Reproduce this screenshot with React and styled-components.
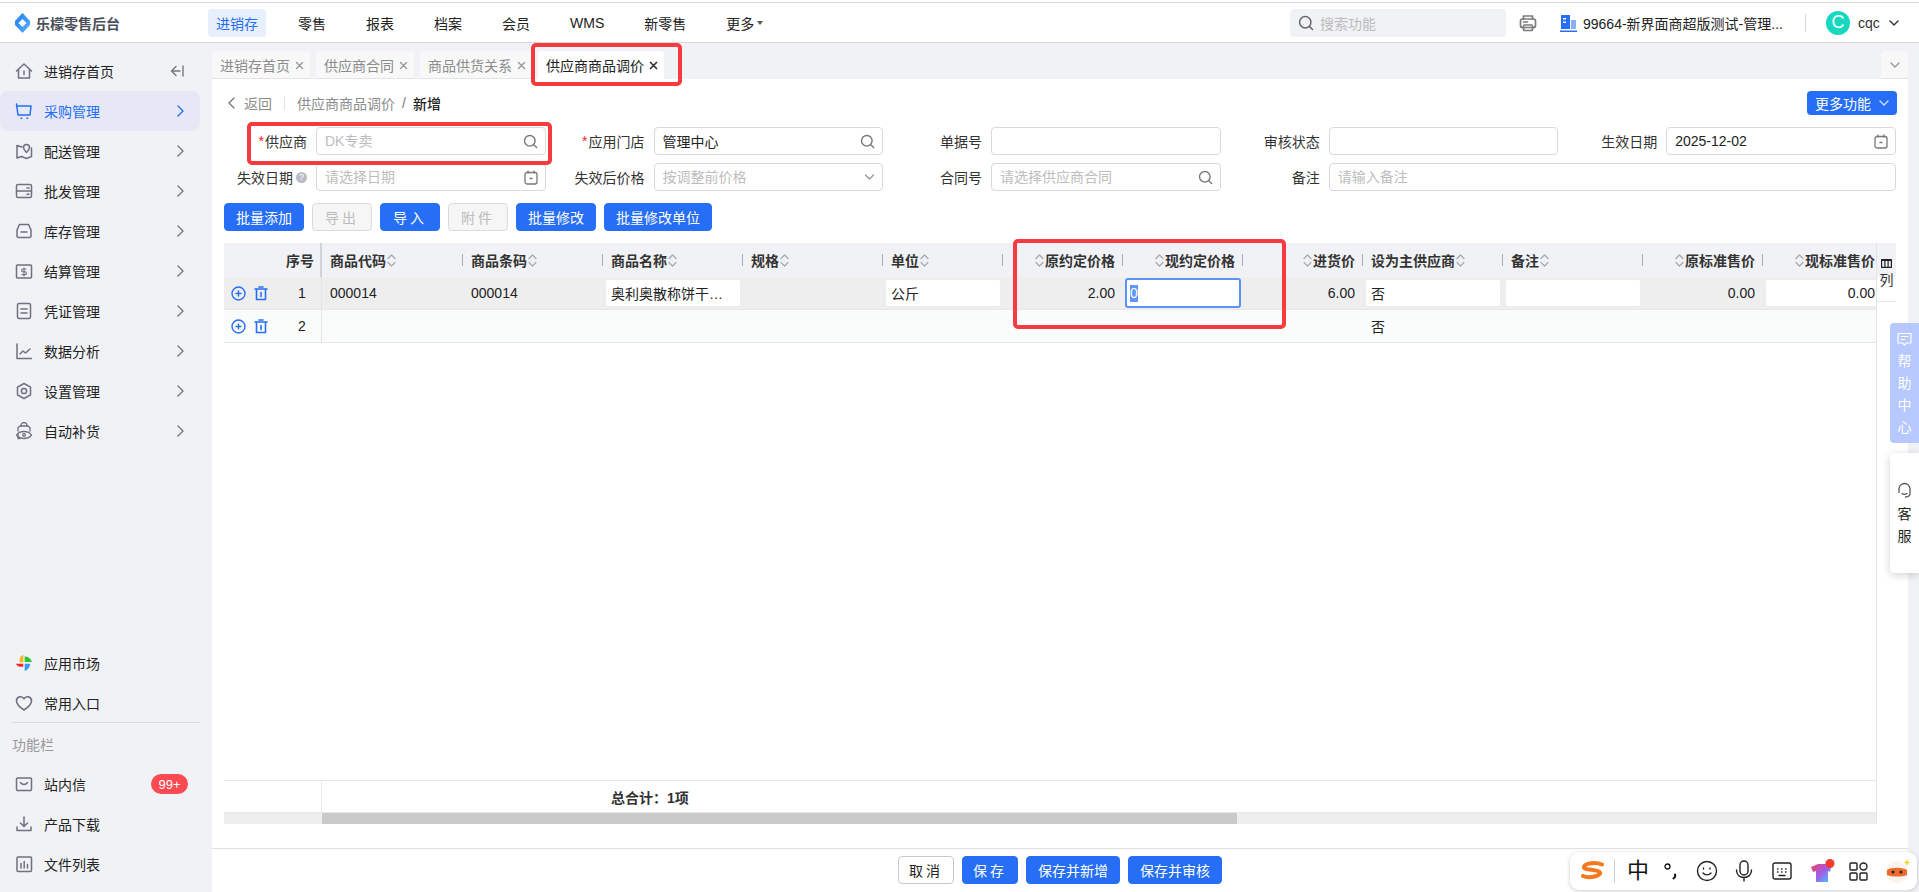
import React from "react";
import styled, { createGlobalStyle } from "styled-components";

const FONT = `"Liberation Sans", "Noto Sans CJK SC", sans-serif`;
const BLUE = "#256ef5";
const COLS = "98px 141px 140px 140px 140px 120px 120px 120px 120px 140px 140px 120px 120px";

const Global = createGlobalStyle`
  html, body { margin: 0; padding: 0; height: 100%; overflow: hidden; }
  body { font-family: ${FONT}; font-size: 14px; color: #222; background: #fff; }
  * { box-sizing: border-box; }
  input { font-family: ${FONT}; }
  input::placeholder { color: #bdbdbd; opacity: 1; }
`;

const Page = styled.div`position: relative; width: 1919px; height: 892px; display: flex; flex-direction: column; overflow: hidden;`;

/* header */
const Header = styled.header`
  height: 41px; margin-top: 2px; flex: none; display: flex; align-items: center; background: #fff;
  border-top: 1px solid #d9d9d9; border-bottom: 1px solid #d8d8d8; padding: 0 20px 0 15px;
`;
const Brand = styled.div`width: 193px; display: flex; align-items: center; gap: 6px; font-size: 14px; font-weight: 700; color: #4a4f5a;`;
const TopNav = styled.nav`display: flex; gap: 24px; align-items: center;`;
const TopItem = styled.div`
  height: 28px; padding: 0 8px; display: flex; align-items: center; gap: 3px; border-radius: 4px; font-size: 14px;
  color: ${p => (p.$active ? BLUE : "#222")}; background: ${p => (p.$active ? "#e8effc" : "transparent")};
`;
const Caret = styled.span`width: 0; height: 0; border-left: 3.5px solid transparent; border-right: 3.5px solid transparent; border-top: 4px solid #555;`;
const TopRight = styled.div`margin-left: auto; display: flex; align-items: center;`;
const SearchBox = styled.div`width: 216px; height: 28px; border-radius: 4px; background: #f1f2f5; display: flex; align-items: center; gap: 6px; padding-left: 8px; color: #bbb; font-size: 14px;`;
const PrinterSlot = styled.div`margin-left: 13px; display: flex;`;
const StoreSlot = styled.div`margin-left: 23px; display: flex;`;
const StoreName = styled.div`margin-left: 6px; width: 203px; white-space: nowrap; color: #222;`;
const VSep = styled.div`margin: 0 20px 0 19px; width: 1px; height: 18px; background: #d8d8d8;`;
const Avatar = styled.div`width: 24px; height: 24px; border-radius: 50%; background: #14d9bf; color: #fff; display: flex; align-items: center; justify-content: center; font-size: 18px;`;
const UserName = styled.div`margin: 0 10px 0 8px; width: 21px; color: #333;`;

/* body */
const Body = styled.div`flex: 1; min-height: 0; display: flex;`;
const Sidebar = styled.aside`width: 212px; flex: none; background: #f1f2f5; display: flex; flex-direction: column; padding-top: 8px;`;
const SideGroup = styled.div`display: flex; flex-direction: column; margin-top: ${p => (p.$bottom ? "auto" : "0")}; padding-bottom: ${p => (p.$bottom ? "8px" : "0")};`;
const SideItem = styled.div`
  height: 40px; width: 200px; flex: none; display: flex; align-items: center; padding: 0 16px 0 15px; gap: 11px; border-radius: 8px; font-size: 14px;
  color: ${p => (p.$active ? BLUE : "#222")}; background: ${p => (p.$active ? "#e6e9f5" : "transparent")};
  svg.end { margin-left: auto; }
`;
const IconBox = styled.span`width: 18px; height: 18px; flex: none; display: flex; align-items: center; justify-content: center;`;
const Badge = styled.span`margin-left: auto; margin-right: -4px; width: 37px; height: 20px; border-radius: 10px; background: #fb4a52; color: #fff; font-size: 13px; display: flex; align-items: center; justify-content: center;`;
const SideRule = styled.div`height: 1px; margin: -1px 12px 0; background: #d9dadd;`;
const SideTitle = styled.div`height: 41px; padding-left: 12px; display: flex; align-items: center; color: #999; font-size: 14px;`;

const Main = styled.main`flex: 1; min-width: 0; display: flex; flex-direction: column; background: #f1f2f5; padding-right: 11px;`;
const TabBar = styled.div`height: 36px; flex: none; padding-top: 8px; display: flex; gap: 6px; position: relative;`;
const Tab = styled.div`
  height: 28px; display: flex; align-items: center; gap: 5px; border-radius: 4px 4px 0 0; padding: 0 6px 0 8px;
  background: ${p => (p.$active ? "#fff" : "#f8f8f9")}; color: ${p => (p.$active ? "#222" : "#8c8c8c")};
  box-shadow: ${p => (p.$active ? "none" : "inset 0 -1px 0 #e4e4e6")};
`;
const TabMore = styled.div`margin-left: auto; width: 27px; height: 28px; background: #f8f8f9; border-radius: 4px 4px 0 0; display: flex; align-items: center; justify-content: center; box-shadow: inset 0 -1px 0 #e4e4e6;`;

const Content = styled.section`flex: 1; min-height: 0; background: #fff; display: flex; flex-direction: column; padding-top: 12px;`;
const Crumbs = styled.div`height: 24px; flex: none; display: flex; align-items: center; padding: 0 11px 0 16px; color: #8c8c8c;`;
const BackText = styled.span`margin-left: 9px; color: #8c8c8c;`;
const CrumbSep = styled.span`width: 1px; height: 14px; margin: 0 12px; background: #e2e2e2;`;
const CrumbSlash = styled.span`margin: 0 7px; color: #777;`;
const CrumbNow = styled.span`color: #222; font-weight: 500;`;
const MoreBtn = styled.button`margin-left: auto; width: 90px; height: 24px; border: 0; border-radius: 4px; background: ${BLUE}; color: #fff; font: 14px ${FONT}; display: flex; align-items: center; justify-content: center; gap: 8px; padding: 0;`;

const FormGrid = styled.div`flex: none; margin: 12px 0 0 16px; display: grid; grid-template-columns: repeat(5, 317.8px); column-gap: 19.75px; row-gap: 8px;`;
const Field = styled.div`display: grid; grid-template-columns: 88px 1fr; align-items: center; grid-column: span ${p => p.$span || 1};`;
const Label = styled.label`display: flex; align-items: center; justify-content: flex-end; padding-right: 9px; color: #333; white-space: nowrap;`;
const Star = styled.span`color: #f5222d; margin-right: 1px;`;
const Help = styled.span`margin-left: 3px; width: 11px; height: 11px; border-radius: 50%; background: #b9bcc6; color: #fff; font-size: 9px; line-height: 11px; text-align: center;`;
const FieldBox = styled.div`height: 28px; border: 1px solid #d9d9d9; border-radius: 4px; background: #fff; display: flex; align-items: center; padding: 0 7px 0 8px;`;
const FieldInput = styled.input`flex: 1; min-width: 0; border: 0; outline: 0; padding: 0; font-size: 14px; color: #222; background: transparent;`;

const Toolbar = styled.div`flex: none; margin: 12px 0 0 12px; display: flex; gap: 8px;`;
const Btn = styled.button`
  height: 28px; padding: 0; width: ${p => p.$w}px; border-radius: 4px; font: 14px ${FONT}; display: flex; align-items: center; justify-content: center;
  border: 1px solid ${p => (p.$kind === "primary" ? BLUE : p.$kind === "disabled" ? "#dcdcdc" : "#c8c8c8")};
  background: ${p => (p.$kind === "primary" ? BLUE : p.$kind === "disabled" ? "#f6f6f6" : "#fff")};
  color: ${p => (p.$kind === "primary" ? "#fff" : p.$kind === "disabled" ? "#bbb" : "#222")};
  letter-spacing: ${p => (p.$spaced ? "3px" : "0")};
`;

const TableWrap = styled.div`flex: 1; min-height: 0; margin: 12px 12px 0; display: flex;`;
const TableMain = styled.div`width: 1652px; flex: none; display: flex; flex-direction: column; overflow: hidden;`;
const Row = styled.div`
  display: grid; grid-template-columns: ${COLS}; width: 1659px; flex: none; height: ${p => p.$h}px; background: ${p => p.$bg};
  border-bottom: ${p => (p.$line ? "1px solid #e8e8e8" : "0")};
`;
const HeadCell = styled.div`
  position: relative; display: flex; align-items: center; gap: 1px; padding: 0 8px; font-weight: 700; color: #333; white-space: nowrap;
  justify-content: ${p => (p.$right ? "flex-end" : "flex-start")};
  &::after { content: ""; display: ${p => (p.$nosep ? "none" : "block")}; position: absolute; right: 0; top: 11px; height: 12px; width: 1px; background: #a9adb8; }
`;
const SeqHead = styled.div`display: flex; align-items: center; justify-content: flex-end; padding-right: 6px; font-weight: 700; color: #333; border-right: 2px solid #cfd2d9;`;
const ActionCell = styled.div`display: flex; align-items: center; padding-left: 7px; border-right: 1px solid #e4e4e4; gap: 8px;`;
const SeqNum = styled.span`margin-left: 16px; width: 20px; text-align: center; color: #222;`;
const Cell = styled.div`display: flex; align-items: center; padding: 0 8px; color: #222; justify-content: ${p => (p.$right ? "flex-end" : "flex-start")};`;
const EditCell = styled.div`display: flex; align-items: center; padding: 0 3px; justify-content: ${p => (p.$right ? "flex-end" : "flex-start")};`;
const EditBox = styled.div`
  width: 100%; height: 26px; border-radius: 2px; background: #fff; padding: 0 5px; display: flex; align-items: center; color: #222; overflow: hidden;
  justify-content: ${p => (p.$right ? "flex-end" : "flex-start")}; white-space: nowrap;
`;
const FocusBox = styled.div`width: calc(100% + 2px); flex: none; height: 30px; margin-left: -1px; border: 2px solid #5b93f3; border-radius: 3px; background: #fff; padding: 0 3px; display: flex; align-items: center;`;
const Selected = styled.span`background: #5f96f6; color: #fff; line-height: 17px;`;
const TableSpace = styled.div`flex: 1; min-height: 0;`;
const FootRow = styled.div`height: 33px; flex: none; display: grid; grid-template-columns: 98px 1fr; border-top: 1px solid #e8e8e8; border-bottom: 1px solid #e8e8e8;`;
const FootLead = styled.div`border-right: 1px solid #e8e8e8;`;
const FootText = styled.div`padding-left: 289px; display: flex; align-items: center; font-weight: 700; color: #333;`;
const Track = styled.div`height: 11px; flex: none; background: #eeeeee; padding-left: 98px;`;
const Thumb = styled.div`height: 100%; width: 915px; background: #cacaca;`;
const SetCol = styled.div`width: 20px; flex: none; border-left: 1px solid #e4e4e4;`;
const SetHead = styled.div`height: 59px; border-bottom: 1px solid #e8e8e8; display: flex; flex-direction: column; align-items: center; gap: 4px; padding-top: 16px; font-size: 14px; color: #333; line-height: 17px; background: linear-gradient(#f1f2f5 34px, #fff 34px);`;

const BottomBar = styled.footer`height: 44px; flex: none; margin-top: 24px; border-top: 1px solid #e0e0e0; display: flex; align-items: center; justify-content: center; gap: 8px; padding-bottom: 1px;`;

/* overlays */
const Mark = styled.div`position: absolute; left: ${p => p.$x}px; top: ${p => p.$y}px; width: ${p => p.$w}px; height: ${p => p.$h}px; border: 4px solid #f63a3f; border-radius: 5px; pointer-events: none;`;
const HelpFloat = styled.div`position: absolute; left: 1890px; top: 323px; width: 29px; height: 120px; border-radius: 4px 0 0 4px; background: #b6c8fd; color: #fff; display: flex; flex-direction: column; align-items: center; padding-top: 9px; line-height: 22px; font-size: 14px; svg { margin-bottom: 4px; }`;
const ServiceFloat = styled.div`position: absolute; left: 1890px; top: 453px; width: 29px; height: 120px; border-radius: 4px 0 0 4px; background: #fff; color: #222; display: flex; flex-direction: column; align-items: center; padding-top: 29px; line-height: 22px; font-size: 14px; box-shadow: 0 2px 8px rgba(0,0,0,.18); svg { margin-bottom: 3px; }`;
const ImeBar = styled.div`position: absolute; left: 1570px; top: 852px; width: 347px; height: 38px; background: #fff; border-radius: 9px; box-shadow: 0 1px 4px rgba(0,0,0,.2); display: flex; align-items: center; padding-left: 11px;`;
const ImeSep = styled.span`width: 1px; height: 24px; background: #cfcfcf; margin: 0 12px 0 10px;`;
const ImeZh = styled.span`font-size: 22px; color: #111; width: 22px; line-height: 22px; text-align: center; margin-right: 15px;`;
const ImeSlot = styled.span`display: flex; margin-right: ${p => p.$mr}px;`;

/* icons */
const Stroke = ({ w = 18, h = 18, vb, c = "#6d7180", sw = 1.5, children, className }) => (
  <svg className={className} width={w} height={h} viewBox={vb || `0 0 ${w} ${h}`} fill="none" stroke={c} strokeWidth={sw} strokeLinecap="round" strokeLinejoin="round">{children}</svg>
);
const Chev = ({ c = "#777", className }) => <Stroke className={className} w={7} h={12} c={c} sw={1.4}><path d="M1 1l5 5-5 5" /></Stroke>;
const ChevDown = ({ c = "#888", w = 10 }) => <Stroke w={w} h={6} vb="0 0 10 6" c={c} sw={1.4}><path d="M1 1l4 4 4-4" /></Stroke>;
const Mag = ({ c = "#777", s = 15 }) => <Stroke w={s} h={s} vb="0 0 15 15" c={c} sw={1.4}><circle cx="6.8" cy="6.8" r="5.3" /><path d="M11 11l2.6 2.6" /></Stroke>;
const Cal = () => <Stroke w={14} h={15} c="#777" sw={1.3}><rect x="1" y="2.5" width="12" height="11.5" rx="2" /><path d="M4 1v2M10 1v2M6 8.5h2" /></Stroke>;
const X = ({ c = "#999", sw = 1.4 }) => <Stroke w={9} h={9} c={c} sw={sw}><path d="M1.5 1.5l6 6M7.5 1.5l-6 6" /></Stroke>;
const Sort = () => <Stroke w={9} h={15} c="#a5a8b0" sw={1.2}><path d="M1 5.5l3.5-3.5L8 5.5M1 9.5L4.5 13 8 9.5" /></Stroke>;
const Plus = () => <Stroke w={15} h={15} c={BLUE} sw={1.4}><circle cx="7.5" cy="7.5" r="6.5" /><path d="M5 7.5h5M7.5 5v5" /></Stroke>;
const Trash = () => <Stroke w={14} h={15} c={BLUE} sw={1.6}><path d="M1 3h12M5 1h4M2.5 3v10.5h9V3M7 6.5v4" /></Stroke>;

const sideIcons = {
  home: <Stroke><path d="M1.5 9L9 2l7.5 7M3.5 7.500V16h11V7.500M9 9v3.500" /></Stroke>,
  cart: <Stroke c={BLUE}><path d="M1.5 2L3 13h12l1-9H2" /><path d="M6 16.300h.6M12 16.300h.6" /></Stroke>,
  map: <Stroke><path d="M7 5L2 3.500v12.500l4.500-1.500 5 2 5-2V6" /><path d="M11.500 10.500C9.500 8.500 8.500 7 8.500 5.500a3 3 0 016 0c0 1.500-1 3-3 5z" /></Stroke>,
  whole: <Stroke><rect x="1.500" y="2.500" width="15" height="13" rx="1.500" /><path d="M1.500 9h15M12 6h2M12 12.300h2" /></Stroke>,
  stock: <Stroke><path d="M4.500 2.500h9L16 8v6a1.500 1.500 0 01-1.500 1.500h-11A1.500 1.500 0 012 14V8z" /><path d="M6 10h6" /></Stroke>,
  settle: <Stroke><rect x="1.500" y="3" width="15" height="13" rx="1" /><path d="M11 7H8a1.200 1.200 0 000 2.800h2a1.200 1.200 0 010 2.800H7M9 6v8" strokeWidth={1.1} /></Stroke>,
  voucher: <Stroke><rect x="2.500" y="1.500" width="13" height="15" rx="1.500" /><path d="M6 7h6M6 11h6" /></Stroke>,
  chart: <Stroke><path d="M2 2v14.500h14.500M5 12l3-3 2.500 2 4.500-4" /></Stroke>,
  gear: <Stroke><path d="M9 1.500l6.500 3.700v7.600L9 16.500l-6.500-3.700V5.200z" /><circle cx="9" cy="9" r="2.600" /></Stroke>,
  auto: <Stroke sw={1.3}><path d="M3 9V5.500l2-1.500h8l2 1.500V9" /><path d="M6 4V3.500a3 3 0 016 0V4" /><path d="M1.500 13c2-3 4.500-3.500 7.500-3.500s5.500.5 7.500 3.500c-2 2.500-4.500 3.500-7.500 3.500s-5.500-1-7.500-3.500z" /><circle cx="9" cy="13" r="1.300" /><path d="M3 12v4.500h2" /></Stroke>,
  heart: <Stroke sw={1.6}><path d="M9 16C3.500 12.500 1.500 9.800 1.500 6.800A4 4 0 019 4.800a4 4 0 017.500 2c0 3-2 5.700-7.500 9.200z" /></Stroke>,
  mail: <Stroke><rect x="1.500" y="3" width="15" height="12.500" rx="1" /><path d="M5.500 7.500c1 1.500 2.200 2 3.500 2s2.500-.5 3.500-2" /></Stroke>,
  down: <Stroke><path d="M9 2v9M5.500 8L9 11.500 12.500 8M2 12v3.500h14V12" /></Stroke>,
  file: <Stroke><rect x="2" y="2" width="14.500" height="14.500" rx="1" /><path d="M6 8.500v4.500M9.200 6.500v6.500M12.500 9.500V13" /></Stroke>,
  market: (
    <svg width="18" height="18" viewBox="0 0 18 18">
      <path d="M8.300 1C6 1.500 4.500 3.500 4.500 8.300h3.800z" fill="#fbb117" />
      <path d="M9.700 2.500C12.500 2.500 16 4 16.800 8H9.700z" fill="#2ec42e" />
      <path d="M1 9.700h7.300v3C5 13 2 12.500 1 9.700z" fill="#f5282d" />
      <path d="M9.700 9.700h5.500c0 3-2.500 6.300-5.500 7.300z" fill="#3d9bf5" />
    </svg>
  ),
};

const sideTop = [
  ["home", "进销存首页"], ["cart", "采购管理"], ["map", "配送管理"], ["whole", "批发管理"], ["stock", "库存管理"],
  ["settle", "结算管理"], ["voucher", "凭证管理"], ["chart", "数据分析"], ["gear", "设置管理"], ["auto", "自动补货"],
];

const headCols = [
  { t: "商品代码" }, { t: "商品条码" }, { t: "商品名称" }, { t: "规格" }, { t: "单位" },
  { t: "原约定价格", r: 1 }, { t: "现约定价格", r: 1 }, { t: "进货价", r: 1 },
  { t: "设为主供应商" }, { t: "备注" }, { t: "原标准售价", r: 1 }, { t: "现标准售价", r: 1, nosep: 1 },
];

export default function App() {
  return (
    <Page>
      <Global />
      <Header>
        <Brand>
          <svg width="15" height="20" viewBox="0 0 15 20">
            <defs><linearGradient id="logo" x1="0" y1="0" x2="1" y2="1"><stop offset="0" stopColor="#1f7af2" /><stop offset="1" stopColor="#58b4fa" /></linearGradient></defs>
            <path fillRule="evenodd" d="M7.500 0L15 8v4l-7.500 8L0 12V8zM7.500 6L3.500 10l4 4 4-4z" fill="url(#logo)" />
          </svg>
          乐檬零售后台
        </Brand>
        <TopNav>
          <TopItem $active>进销存</TopItem>
          <TopItem>零售</TopItem>
          <TopItem>报表</TopItem>
          <TopItem>档案</TopItem>
          <TopItem>会员</TopItem>
          <TopItem>WMS</TopItem>
          <TopItem>新零售</TopItem>
          <TopItem>更多<Caret /></TopItem>
        </TopNav>
        <TopRight>
          <SearchBox><Mag c="#666" s={16} />搜索功能</SearchBox>
          <PrinterSlot>
            <Stroke c="#7a7a7a" sw={1.7}><path d="M4.500 5V2h9v3" /><rect x="1.500" y="5" width="15" height="8.500" rx="2" /><rect x="4.500" y="11" width="9" height="5.500" rx="1" /><path d="M4.500 8h4" /></Stroke>
          </PrinterSlot>
          <StoreSlot>
            <svg width="17" height="18" viewBox="0 0 17 18">
              <path d="M1 1h9v14H1z" fill={BLUE} />
              <path d="M11 6h5v9h-5z" fill="#8ab0f8" />
              <path d="M3 4h3v1.500H3zM3 7.500h3V9H3z" fill="#fff" />
              <path d="M0 16.500h17V18H0z" fill={BLUE} />
            </svg>
          </StoreSlot>
          <StoreName>99664-新界面商超版测试-管理...</StoreName>
          <VSep />
          <Avatar>C</Avatar>
          <UserName>cqc</UserName>
          <ChevDown c="#333" />
        </TopRight>
      </Header>
      <Body>
        <Sidebar>
          <SideGroup>
            {sideTop.map(([k, t], i) => (
              <SideItem key={k} $active={k === "cart"}>
                <IconBox>{sideIcons[k]}</IconBox>
                {t}
                {i === 0 ? (
                  <Stroke className="end" w={14} h={12} c="#777" sw={1.4}><path d="M6 1.500L1.500 6 6 10.500M1.500 6H10M13 1v10" /></Stroke>
                ) : (
                  <Chev className="end" c={k === "cart" ? BLUE : "#777"} />
                )}
              </SideItem>
            ))}
          </SideGroup>
          <SideGroup $bottom>
            <SideItem><IconBox>{sideIcons.market}</IconBox>应用市场</SideItem>
            <SideItem><IconBox>{sideIcons.heart}</IconBox>常用入口</SideItem>
            <SideRule />
            <SideTitle>功能栏</SideTitle>
            <SideItem><IconBox>{sideIcons.mail}</IconBox>站内信<Badge>99+</Badge></SideItem>
            <SideItem><IconBox>{sideIcons.down}</IconBox>产品下载</SideItem>
            <SideItem><IconBox>{sideIcons.file}</IconBox>文件列表</SideItem>
          </SideGroup>
        </Sidebar>
        <Main>
          <TabBar>
            <Tab>进销存首页<X /></Tab>
            <Tab>供应商合同<X /></Tab>
            <Tab>商品供货关系<X /></Tab>
            <Tab $active>供应商商品调价<X c="#333" sw={1.7} /></Tab>
            <TabMore><ChevDown c="#999" /></TabMore>
          </TabBar>
          <Content>
            <Crumbs>
              <Stroke w={7} h={12} c="#777" sw={1.3}><path d="M6 1L1 6l5 5" /></Stroke>
              <BackText>返回</BackText>
              <CrumbSep />
              供应商商品调价
              <CrumbSlash>/</CrumbSlash>
              <CrumbNow>新增</CrumbNow>
              <MoreBtn>更多功能<ChevDown c="#cfe0ff" /></MoreBtn>
            </Crumbs>
            <FormGrid>
              <Field><Label><Star>*</Star>供应商</Label><FieldBox><FieldInput readOnly placeholder="DK专卖" /><Mag /></FieldBox></Field>
              <Field><Label><Star>*</Star>应用门店</Label><FieldBox><FieldInput readOnly value="管理中心" /><Mag /></FieldBox></Field>
              <Field><Label>单据号</Label><FieldBox><FieldInput readOnly /></FieldBox></Field>
              <Field><Label>审核状态</Label><FieldBox><FieldInput readOnly /></FieldBox></Field>
              <Field><Label>生效日期</Label><FieldBox><FieldInput readOnly value="2025-12-02" /><Cal /></FieldBox></Field>
              <Field><Label>失效日期<Help>?</Help></Label><FieldBox><FieldInput readOnly placeholder="请选择日期" /><Cal /></FieldBox></Field>
              <Field><Label>失效后价格</Label><FieldBox><FieldInput readOnly placeholder="按调整前价格" /><ChevDown c="#999" w={11} /></FieldBox></Field>
              <Field><Label>合同号</Label><FieldBox><FieldInput readOnly placeholder="请选择供应商合同" /><Mag /></FieldBox></Field>
              <Field $span={2}><Label>备注</Label><FieldBox><FieldInput readOnly placeholder="请输入备注" /></FieldBox></Field>
            </FormGrid>
            <Toolbar>
              <Btn $kind="primary" $w={80}>批量添加</Btn>
              <Btn $kind="disabled" $w={60} $spaced>导出</Btn>
              <Btn $kind="primary" $w={60} $spaced>导入</Btn>
              <Btn $kind="disabled" $w={60} $spaced>附件</Btn>
              <Btn $kind="primary" $w={80}>批量修改</Btn>
              <Btn $kind="primary" $w={108}>批量修改单位</Btn>
            </Toolbar>
            <TableWrap>
              <TableMain>
                <Row $h={34} $bg="#f1f2f5">
                  <SeqHead>序号</SeqHead>
                  {headCols.map(c => (
                    <HeadCell key={c.t} $right={c.r} $nosep={c.nosep}>
                      {c.r ? <Sort /> : null}{c.t}{c.r ? null : <Sort />}
                    </HeadCell>
                  ))}
                </Row>
                <Row $h={33} $bg="#eeeeee" $line>
                  <ActionCell><Plus /><Trash /><SeqNum>1</SeqNum></ActionCell>
                  <Cell>000014</Cell>
                  <Cell>000014</Cell>
                  <EditCell><EditBox>奥利奥散称饼干…</EditBox></EditCell>
                  <Cell />
                  <EditCell><EditBox>公斤</EditBox></EditCell>
                  <Cell $right>2.00</Cell>
                  <EditCell><FocusBox><Selected>0</Selected></FocusBox></EditCell>
                  <Cell $right>6.00</Cell>
                  <EditCell><EditBox>否</EditBox></EditCell>
                  <EditCell><EditBox /></EditCell>
                  <Cell $right>0.00</Cell>
                  <EditCell><EditBox $right>0.00</EditBox></EditCell>
                </Row>
                <Row $h={33} $bg="#fafbfb" $line>
                  <ActionCell><Plus /><Trash /><SeqNum>2</SeqNum></ActionCell>
                  <Cell /><Cell /><Cell /><Cell /><Cell /><Cell /><Cell /><Cell />
                  <Cell>否</Cell>
                  <Cell /><Cell /><Cell />
                </Row>
                <TableSpace />
                <FootRow><FootLead /><FootText>总合计：1项</FootText></FootRow>
                <Track><Thumb /></Track>
              </TableMain>
              <SetCol>
                <SetHead>
                  <Stroke w={11} h={9} c="#222" sw={1.2}><rect x=".6" y=".6" width="9.800" height="7.800" /><path d="M3.900 1v7M7.100 1v7M.6 1.500h9.800" /></Stroke>
                  列
                </SetHead>
              </SetCol>
            </TableWrap>
            <BottomBar>
              <Btn $w={56} $spaced>取消</Btn>
              <Btn $kind="primary" $w={56} $spaced>保存</Btn>
              <Btn $kind="primary" $w={94}>保存并新增</Btn>
              <Btn $kind="primary" $w={94}>保存并审核</Btn>
            </BottomBar>
          </Content>
        </Main>
      </Body>

      <Mark $x={531} $y={43} $w={151} $h={43} />
      <Mark $x={247} $y={122} $w={305} $h={43} />
      <Mark $x={1013} $y={239} $w={273} $h={90} />

      <HelpFloat>
        <Stroke w={15} h={14} c="#fff" sw={1.2}><path d="M1 1.500h13v9.500H9.500L7.500 13l-2-2H1zM4 4.500h7M4 7.500h4" /></Stroke>
        帮<br />助<br />中<br />心
      </HelpFloat>
      <ServiceFloat>
        <Stroke w={17} h={18} c="#555" sw={1.3}><path d="M3 9V7a5.500 5.500 0 0111 0v2M3 6.500v4M14 6.500v4M14 11c0 3-2.500 4-4.500 4M6 11.500c1.500 1 3.500 1 5 0" /></Stroke>
        客<br />服
      </ServiceFloat>
      <ImeBar>
        <svg width="23" height="20" viewBox="0 0 23 20"><path d="M21 3.500C15 1 4 2 3 6c-.8 3.500 14 2 16 5.500 1.500 3-10 6.500-17 3.500" fill="none" stroke="#f47a20" strokeWidth="4" strokeLinecap="round" /></svg>
        <ImeSep />
        <ImeZh>中</ImeZh>
        <ImeSlot $mr={19}><Stroke w={13} h={18} c="#111" sw={1.3}><circle cx="3.500" cy="4.500" r="2.500" /><path d="M11 12.500c.5 1.500 0 3-1.500 4" strokeWidth="2" /></Stroke></ImeSlot>
        <ImeSlot $mr={17}><Stroke w={22} h={22} c="#222" sw={1.4}><circle cx="11" cy="11" r="9.500" /><path d="M7 13c2 2.500 6 2.500 8 0M7.500 8v1M14 8v1" /></Stroke></ImeSlot>
        <ImeSlot $mr={19}><Stroke w={18} h={22} c="#222" sw={1.4}><rect x="5" y="1" width="8" height="14" rx="4" /><path d="M1.500 10c0 5 3.500 7.500 7.500 7.500s7.500-2.500 7.500-7.500M9 17.500V21" /></Stroke></ImeSlot>
        <ImeSlot $mr={19}><Stroke w={20} h={18} c="#222" sw={1.4}><rect x="1" y="1" width="18" height="16" rx="2" /><path d="M5.500 7h.5M9.500 7h.5M13.500 7h.5M5.500 10h.5M9.500 10h.5M13.500 10h.5M7 13.500h6" /></Stroke></ImeSlot>
        <ImeSlot $mr={14}>
          <svg width="24" height="24" viewBox="0 0 24 24">
            <defs><linearGradient id="shirt" x1="0" y1="0" x2="1" y2="1"><stop offset="0" stopColor="#f0455a" /><stop offset=".5" stopColor="#a35be8" /><stop offset="1" stopColor="#43c8ff" /></linearGradient></defs>
            <path d="M0 8l7-3h8l5 3-1 5-2-1v11H5V12l-3 1z" fill="url(#shirt)" />
            <circle cx="19" cy="4.500" r="4.500" fill="#f53c2e" />
          </svg>
        </ImeSlot>
        <ImeSlot $mr={17}><Stroke w={19} h={19} c="#222" sw={1.4}><rect x="1" y="1" width="7" height="7" rx="1" /><circle cx="14.500" cy="4.500" r="3.500" /><rect x="1" y="11" width="7" height="7" rx="1" /><rect x="11" y="11" width="7" height="7" rx="1" /></Stroke></ImeSlot>
        <svg width="26" height="26" viewBox="0 0 26 26">
          <circle cx="12" cy="14" r="11" fill="#faf3ee" />
          <path d="M2 12c4-3 15-3 20 0v5c-5 2-15 2-20 0z" fill="#ee6c2b" />
          <circle cx="8" cy="14" r="1.500" fill="#222" /><circle cx="16" cy="14" r="1.500" fill="#222" />
          <path d="M22 1l1 2.500 2.500 1-2.500 1-1 2.500-1-2.500-2.500-1 2.500-1z" fill="#f6d53c" />
        </svg>
      </ImeBar>
    </Page>
  );
}
